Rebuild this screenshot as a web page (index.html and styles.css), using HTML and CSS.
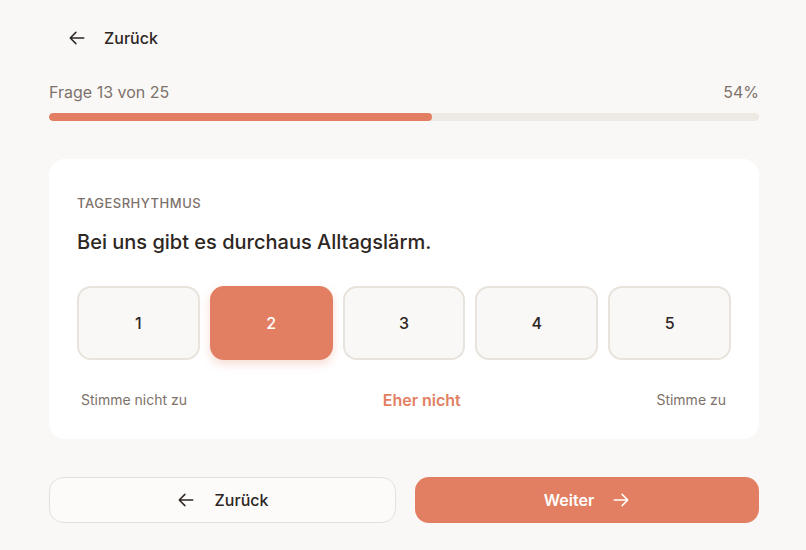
FILE: index.html
```html
<!DOCTYPE html>
<html lang="de">
<head>
<meta charset="utf-8">
<title>Frage 13 von 25</title>
<link rel="stylesheet" href="styles.css">
</head>
<body>
<div class="page">
  <header class="topbar">
    <button class="back-link" type="button">
      <svg class="icon" viewBox="0 0 24 24" width="18" height="18" fill="none" stroke="currentColor" stroke-width="2" stroke-linecap="round" stroke-linejoin="round"><path d="M10.5 19.5L3 12l7.5-7.5M3 12h18"/></svg>
      <span>Zurück</span>
    </button>
  </header>

  <section class="progress">
    <div class="progress-meta">
      <span>Frage 13 von 25</span>
      <span>54%</span>
    </div>
    <div class="progress-track"><div class="progress-fill" style="width:54%"></div></div>
  </section>

  <section class="card">
    <div class="category">TAGESRHYTHMUS</div>
    <h1 class="question">Bei uns gibt es durchaus Alltagslärm.</h1>
    <div class="scale">
      <button class="opt" type="button">1</button>
      <button class="opt selected" type="button">2</button>
      <button class="opt" type="button">3</button>
      <button class="opt" type="button">4</button>
      <button class="opt" type="button">5</button>
    </div>
    <div class="scale-labels">
      <span class="lbl">Stimme nicht zu</span>
      <span class="current">Eher nicht</span>
      <span class="lbl">Stimme zu</span>
    </div>
  </section>

  <nav class="actions">
    <button class="btn btn-secondary" type="button">
      <svg class="icon" viewBox="0 0 24 24" width="18" height="18" fill="none" stroke="currentColor" stroke-width="2" stroke-linecap="round" stroke-linejoin="round"><path d="M10.5 19.5L3 12l7.5-7.5M3 12h18"/></svg>
      <span>Zurück</span>
    </button>
    <button class="btn btn-primary" type="button">
      <span>Weiter</span>
      <svg class="icon" viewBox="0 0 24 24" width="18" height="18" fill="none" stroke="currentColor" stroke-width="2" stroke-linecap="round" stroke-linejoin="round"><path d="M13.5 4.5L21 12l-7.5 7.5M21 12H3"/></svg>
    </button>
  </nav>
</div>
</body>
</html>
```
FILE: styles.css
```css
* { box-sizing: border-box; }
html, body { margin: 0; padding: 0; }
body {
  background: #faf8f6;
  font-family: Inter, "Noto Sans", "Liberation Sans", sans-serif;
  color: #2d2623;
}
button { font-family: inherit; cursor: pointer; }

.page {
  width: 710px;
  margin: 0 0 0 49px;
  padding-top: 18px;
}

.topbar { height: 40px; display: flex; align-items: center; }
.back-link {
  display: flex;
  align-items: center;
  gap: 18px;
  background: none;
  border: 0;
  padding: 0 0 0 19px;
  height: 40px;
  font-size: 16px;
  font-weight: 500;
  color: #2d2623;
}
.icon { display: block; flex: none; }

.progress { margin-top: 24px; }
.progress-meta {
  display: flex;
  justify-content: space-between;
  font-size: 16px;
  line-height: 20px;
  color: #7d726b;
}
.progress-track {
  margin-top: 11px;
  height: 8px;
  border-radius: 4px;
  background: #efe9e3;
  overflow: hidden;
}
.progress-fill { height: 100%; background: #e27f62; border-radius: 4px; }

.card {
  margin-top: 38px;
  background: #ffffff;
  border-radius: 16px;
  padding: 36px 28px 29px;
}
.category {
  font-size: 13px;
  line-height: 16px;
  font-weight: 500;
  letter-spacing: 0.04em;
  color: #7d726b;
}
.question {
  margin: 17px 0 0;
  font-size: 20px;
  line-height: 28px;
  font-weight: 500;
  color: #2d2623;
}
.scale {
  margin-top: 30px;
  display: grid;
  grid-template-columns: repeat(5, 1fr);
  gap: 10px;
}
.opt {
  height: 74px;
  border: 2px solid #e9e3dd;
  border-radius: 14px;
  background: #faf8f6;
  font-size: 16px;
  font-weight: 500;
  color: #2d2623;
}
.opt.selected {
  background: #e27f62;
  border-color: #e27f62;
  color: #ffffff;
  box-shadow: 0 4px 10px rgba(226, 127, 98, 0.28);
}
.scale-labels {
  margin-top: 30px;
  display: flex;
  justify-content: space-between;
  align-items: center;
  line-height: 20px;
  padding: 0 5px 0 4px;
}
.lbl { font-size: 14px; color: #7d726b; }
.current { font-size: 16px; font-weight: 600; color: #e27f62; }

.actions {
  margin-top: 38px;
  display: grid;
  grid-template-columns: 347px 1fr;
  gap: 19px;
}
.btn {
  height: 46px;
  border-radius: 14px;
  display: flex;
  align-items: center;
  justify-content: center;
  gap: 20px;
  font-size: 16px;
  font-weight: 500;
}
.btn-secondary {
  background: #fcfbfa;
  border: 1px solid #e6e0da;
  color: #2d2623;
}
.btn-primary {
  background: #e27f62;
  border: 0;
  color: #ffffff;
  font-weight: 600;
  gap: 18px;
}
```
